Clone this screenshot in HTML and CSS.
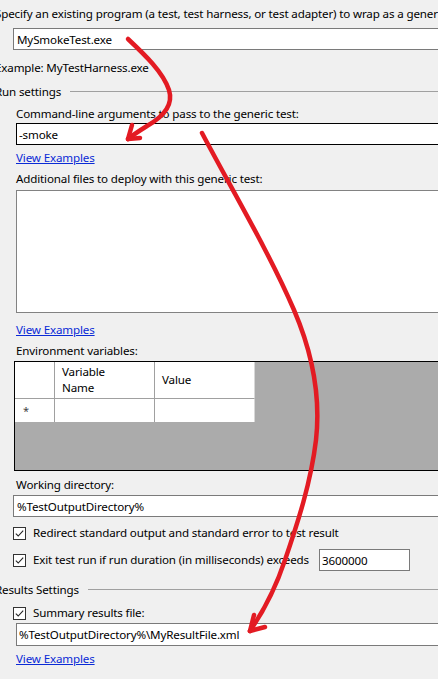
FILE: index.html
```html
<!DOCTYPE html>
<html>
<head>
	<title>Generic Test</title>
	<link rel="stylesheet" href="styles.css">
</head>
<body>
<div class="page">
	<div class="caption caption-outer">Specify an existing program (a test, test harness, or test adapter) to wrap as a generic test:</div>
	<input class="field field-program" type="text" value="MySmokeTest.exe">
	<div class="caption caption-outer caption-example">Example: MyTestHarness.exe</div>

	<div class="group group-run">Run settings</div>

	<div class="caption caption-inner caption-args">Command-line arguments to pass to the generic test:</div>
	<input class="field field-args" type="text" value="-smoke">
	<a class="link link-args" href="#">View Examples</a>

	<div class="caption caption-inner caption-files">Additional files to deploy with this generic test:</div>
	<textarea class="field field-files"></textarea>
	<a class="link link-files" href="#">View Examples</a>

	<div class="caption caption-inner caption-env">Environment variables:</div>
	<div class="env-grid">
		<div class="env-row env-head">
			<div class="cell cell-corner"></div>
			<div class="cell cell-name">Variable<br>Name</div>
			<div class="cell cell-value">Value</div>
		</div>
		<div class="env-row env-new">
			<div class="cell cell-corner"><span class="star">*</span></div>
			<div class="cell cell-name"></div>
			<div class="cell cell-value"></div>
		</div>
	</div>

	<div class="caption caption-inner caption-workdir">Working directory:</div>
	<input class="field field-workdir" type="text" value="%TestOutputDirectory%">

	<div class="check check-redirect">
		<svg class="box" width="13" height="13" viewBox="0 0 13 13"><rect x="0.5" y="0.5" width="12" height="12" fill="#fff" stroke="#333"/><path d="M2.8 6.6 L5.2 9 L10.2 3.6" fill="none" stroke="#222" stroke-width="1.1"/></svg>
		<span>Redirect standard output and standard error to test result</span>
	</div>
	<div class="check check-timeout">
		<svg class="box" width="13" height="13" viewBox="0 0 13 13"><rect x="0.5" y="0.5" width="12" height="12" fill="#fff" stroke="#333"/><path d="M2.8 6.6 L5.2 9 L10.2 3.6" fill="none" stroke="#222" stroke-width="1.1"/></svg>
		<span class="check-label">Exit test run if run duration (in milliseconds) exceeds</span>
		<input class="field field-timeout" type="text" value="3600000">
	</div>

	<div class="group group-results">Results Settings</div>

	<div class="check check-summary">
		<svg class="box" width="13" height="13" viewBox="0 0 13 13"><rect x="0.5" y="0.5" width="12" height="12" fill="#fff" stroke="#333"/><path d="M2.8 6.6 L5.2 9 L10.2 3.6" fill="none" stroke="#222" stroke-width="1.1"/></svg>
		<span>Summary results file:</span>
	</div>
	<input class="field field-summary" type="text" value="%TestOutputDirectory%\MyResultFile.xml">
	<a class="link link-summary" href="#">View Examples</a>
</div>

<!-- hand drawn arrows on top of the dialog -->
<svg class="arrows" width="438" height="679" viewBox="0 0 438 679">
	<g fill="none" stroke="#e31b23" stroke-width="4.5" stroke-linecap="round" stroke-linejoin="round">
		<path d="M128 39 C145 55 163 72 169 90 C174 106 161 118 147 126 C139 131 133 135 128 139"/>
		<path d="M128 139 L132 125"/>
		<path d="M128 139 L140 138"/>
		<path d="M202 133 C232 190 268 250 294 310 C312 352 321 395 316 440 C311 482 298 522 285 560 C275 590 263 612 250 631"/>
		<path d="M250 631 L254 615"/>
		<path d="M250 631 L265 627"/>
	</g>
</svg>
</body>
</html>
```

FILE: styles.css
```css
* {
	box-sizing: border-box;
}
html, body {
	margin: 0;
}
body {
	position: relative;
	width: 438px;
	height: 679px;
	overflow: hidden;
	background: #f0f0f0;
	color: #000;
	font: 11.6px/16px "Noto Sans", "Open Sans", sans-serif;
	letter-spacing: -0.15px;
}
.page {
	width: 480px;
	padding-top: 6px;
}

/* plain text labels */
.caption {
	height: 16px;
	white-space: nowrap;
}
.caption-outer {
	margin-left: -5px;
}
.caption-inner {
	margin-left: 16px;
}
.caption-example {
	margin-top: 10px;
}
.caption-args {
	margin-top: 6px;
}
.caption-files {
	margin-top: 5px;
}
.caption-env {
	margin-top: 5px;
}
.caption-workdir {
	margin-top: 6px;
}

/* group box headers with the rule to the right */
.group {
	display: flex;
	align-items: center;
	height: 16px;
	margin-left: -5px;
	white-space: nowrap;
}
.group:after {
	content: "";
	flex: 1;
	margin-left: 9px;
	margin-top: -1px;
	border-top: 1px solid #a0a0a0;
}
.group-run {
	margin-top: 8px;
}
.group-results {
	margin-top: 11px;
}

/* text boxes */
.field {
	display: block;
	width: 470px;
	height: 22px;
	margin: 0;
	padding: 0 2px;
	border: 1px solid #7a7a7a;
	border-radius: 0;
	background: #fff;
	color: #000;
	font: inherit;
	letter-spacing: inherit;
	outline: none;
}
.field-program {
	margin: 6px 0 0 13px;
	padding-left: 3px;
}
.field-args {
	margin: 1px 0 0 16px;
	border-color: #000;
}
.field-files {
	height: 123px;
	margin: 3px 0 0 16px;
	resize: none;
	border-color: #828282;
}
.field-workdir {
	margin: 2px 0 0 13px;
	padding-left: 3px;
}
.field-timeout {
	width: 91px;
	flex: none;
}
.field-summary {
	height: 23px;
	margin: 2px 0 0 16px;
}

/* link labels */
.link {
	display: block;
	width: max-content;
	height: 16px;
	color: #0a2bd6;
	text-decoration: underline;
}
.link-args {
	margin: 5px 0 0 16px;
}
.link-files {
	margin: 9px 0 0 16px;
}
.link-summary {
	margin: 5px 0 0 16px;
}

/* environment variables grid */
.env-grid {
	width: 470px;
	height: 110px;
	margin: 2px 0 0 14px;
	border: 1px solid #000;
	background: #ababab;
}
.env-row {
	display: flex;
}
.cell {
	background: #fff;
	border-right: 1px solid #a0a0a0;
}
.cell-corner {
	width: 40px;
}
.cell-name,
.cell-value {
	width: 100px;
}
.cell-value {
	border-right-color: #d8d8d8;
}
.env-head .cell {
	display: flex;
	align-items: center;
	height: 37px;
	border-bottom: 1px solid #a0a0a0;
}
.env-head .cell-name {
	padding-left: 7px;
}
.env-head .cell-value {
	padding-left: 7px;
}
.env-new .cell {
	height: 23px;
}
.star {
	display: block;
	padding: 4px 0 0 8px;
	color: #444;
	font-size: 11px;
}

/* check boxes */
.check {
	display: flex;
	align-items: center;
	height: 16px;
	margin-left: 13px;
	white-space: nowrap;
}
.check .box {
	flex: none;
	margin-right: 7px;
}
.check-redirect {
	margin-top: 8px;
}
.check-timeout {
	height: 22px;
	margin-top: 8px;
}
.check-label {
	width: 286px;
	flex: none;
}
.check-summary {
	margin-top: 7px;
}

.arrows {
	position: absolute;
	left: 0;
	top: 0;
	pointer-events: none;
}
```
